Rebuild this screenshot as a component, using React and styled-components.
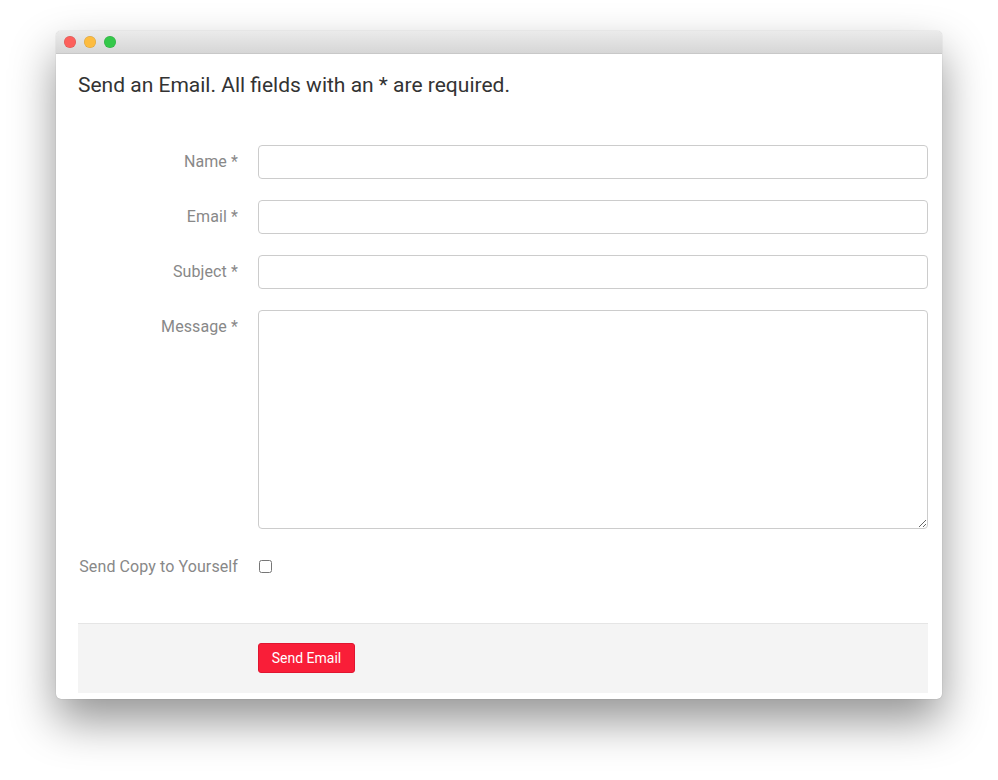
import React from "react";
import styled, { createGlobalStyle } from "styled-components";

const Global = createGlobalStyle`
  body {
    margin: 0;
    background: #fff;
    font-family: Roboto, "Liberation Sans", sans-serif;
  }
`;

const Page = styled.div`
  padding: 31px 0 0 56px;
  width: 998px;
  height: 780px;
  box-sizing: border-box;
`;

const Window = styled.div`
  width: 886px;
  height: 668px;
  background: #fff;
  border-radius: 5px;
  overflow: hidden;
  display: flex;
  flex-direction: column;
  box-shadow: 0 22px 45px rgba(0, 0, 0, 0.42), 0 0 1px rgba(0, 0, 0, 0.35);
`;

const TitleBar = styled.div`
  height: 23px;
  flex: none;
  background: linear-gradient(#ebebeb, #d6d6d6);
  border-bottom: 1px solid #c8c8c8;
  box-sizing: border-box;
  display: flex;
  align-items: center;
  gap: 8px;
  padding-left: 8px;
`;

const Light = styled.span`
  width: 12px;
  height: 12px;
  border-radius: 50%;
  background: ${(p) => p.color};
  box-shadow: inset 0 0 0 0.5px rgba(0, 0, 0, 0.15);
`;

const Body = styled.div`
  flex: 1;
  padding: 0 14px 6px 22px;
  display: flex;
  flex-direction: column;
`;

const Heading = styled.h1`
  margin: 19px 0 0;
  font-size: 21px;
  font-weight: 400;
  line-height: 24px;
  color: #333;
`;

const Form = styled.form`
  margin-top: 48px;
  display: flex;
  flex-direction: column;
  gap: 21px;
  flex: 1;
`;

const Row = styled.div`
  display: grid;
  grid-template-columns: 160px 670px;
  column-gap: 20px;
  align-items: start;
`;

const Label = styled.label`
  text-align: right;
  font-size: 16px;
  letter-spacing: 0.1px;
  line-height: 34px;
  color: #888;
`;

const Input = styled.input`
  height: 34px;
  box-sizing: border-box;
  border: 1px solid #ccc;
  border-radius: 4px;
  padding: 6px 12px;
  font-size: 14px;
  outline: none;
`;

const Textarea = styled.textarea`
  height: 219px;
  box-sizing: border-box;
  border: 1px solid #ccc;
  border-radius: 4px;
  padding: 6px 12px;
  font-size: 14px;
  resize: vertical;
  outline: none;
`;

const Check = styled.input`
  margin: 10px 0 0 1px;
  width: 13px;
  height: 13px;
`;

const Footer = styled.div`
  margin-top: auto;
  height: 70px;
  box-sizing: border-box;
  background: #f4f4f4;
  border-top: 1px solid #e5e5e5;
  display: grid;
  grid-template-columns: 160px auto;
  column-gap: 20px;
  align-items: center;
  justify-content: start;
`;

const Button = styled.button`
  grid-column: 2;
  width: 97px;
  height: 30px;
  margin-top: -1px;
  padding: 0;
  background: #f91e38;
  border: 1px solid #e01530;
  border-radius: 3px;
  color: #fff;
  font-family: Roboto, "Liberation Sans", sans-serif;
  font-size: 14px;
  cursor: pointer;
`;

export default function App() {
  return (
    <>
      <Global />
      <Page>
        <Window>
          <TitleBar>
            <Light color="#fc605c" />
            <Light color="#fdbc40" />
            <Light color="#34c84a" />
          </TitleBar>
          <Body>
            <Heading>Send an Email. All fields with an * are required.</Heading>
            <Form>
              <Row>
                <Label>Name *</Label>
                <Input type="text" />
              </Row>
              <Row>
                <Label>Email *</Label>
                <Input type="email" />
              </Row>
              <Row>
                <Label>Subject *</Label>
                <Input type="text" />
              </Row>
              <Row>
                <Label>Message *</Label>
                <Textarea />
              </Row>
              <Row>
                <Label>Send Copy to Yourself</Label>
                <Check type="checkbox" />
              </Row>
              <Footer>
                <Button type="button">Send Email</Button>
              </Footer>
            </Form>
          </Body>
        </Window>
      </Page>
    </>
  );
}
